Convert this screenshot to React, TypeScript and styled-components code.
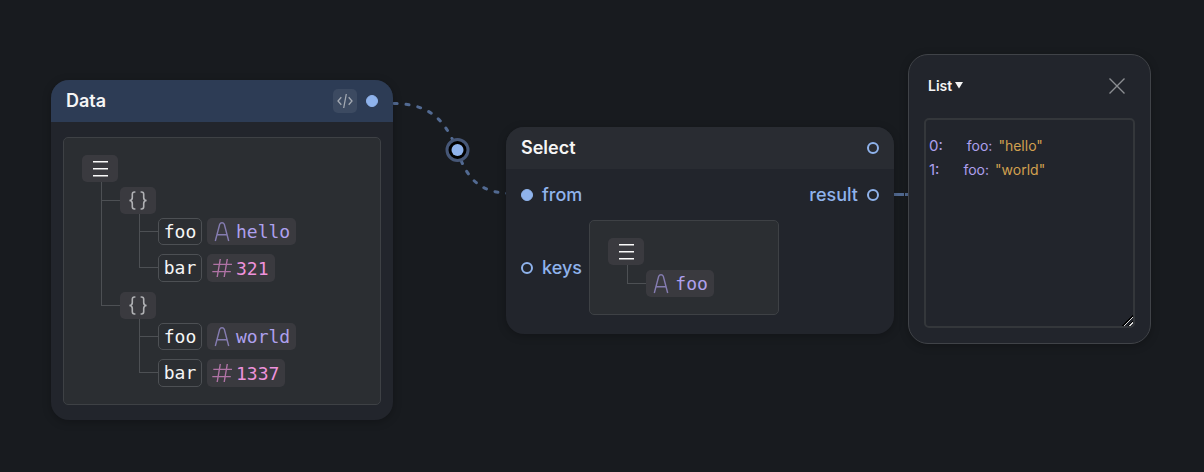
import React from "react";
import styled, { createGlobalStyle, css } from "styled-components";

const GlobalStyle = createGlobalStyle`
  *, *::before, *::after { box-sizing: border-box; }
  body {
    margin: 0;
    background: #181b1f;
    color: #f5f5f5;
    font-family: Inter, "Liberation Sans", sans-serif;
  }
  button { font: inherit; color: inherit; }
`;

const Canvas = styled.main`
  position: relative;
  min-height: 100vh;
  overflow: hidden;
`;

const Edges = styled.svg`
  position: absolute;
  inset: 0;
  width: 100%;
  height: 100%;
  pointer-events: none;
`;

const Node = styled.section<{ $x: number; $y: number; $width: number }>`
  position: absolute;
  left: ${(p) => p.$x}px;
  top: ${(p) => p.$y}px;
  width: ${(p) => p.$width}px;
  border-radius: 18px;
  overflow: hidden;
  background: #22252c;
  box-shadow: 0 2px 8px rgba(0, 0, 0, 0.25);
`;

const NodeHeader = styled.header<{ $accent?: boolean }>`
  display: flex;
  align-items: center;
  gap: 9px;
  height: 42px;
  padding: 0 15px;
  background: ${(p) => (p.$accent ? "#2d3c55" : "#292c32")};
`;

const NodeTitle = styled.h2`
  flex: 1;
  margin: 0;
  font-size: 18px;
  line-height: 24px;
  font-weight: 600;
`;

const CodeButton = styled.button`
  display: grid;
  place-items: center;
  width: 24px;
  height: 24px;
  padding: 0;
  border: 0;
  border-radius: 5px;
  background: #3c4a61;
  color: #a3a9b2;
`;

const Port = styled.button<{ $filled?: boolean }>`
  flex: none;
  width: 12px;
  height: 12px;
  padding: 0;
  border: 1px solid #8fb3ec;
  border-radius: 50%;
  background: ${(p) => (p.$filled ? "#8fb3ec" : "transparent")};
  ${(p) => !p.$filled && css`border-width: 2px;`}
`;

const DataBody = styled.div`
  padding: 15px 12px;
`;

const TreeBox = styled.div<{ $width?: number }>`
  ${(p) => p.$width && css`width: ${p.$width}px;`}
  padding: 17px 18px;
  border: 1px solid #3e4145;
  border-radius: 5px;
  background: #2b2e32;
  font-family: "DejaVu Sans Mono", monospace;
  font-size: 18px;
  line-height: 27px;
`;

const Branch = styled.ul`
  margin: 0;
  padding: 0 0 0 19px;
  list-style: none;
`;

const Leaf = styled.li<{ $gap: number }>`
  display: flex;
  > :last-child { padding-top: ${(p) => p.$gap}px; }
`;

const Connector = styled.div`
  display: flex;
  flex-direction: column;
  flex: none;
  width: 19px;
`;

const Elbow = styled.div<{ $height: number }>`
  height: ${(p) => p.$height}px;
  border: solid #4d5054;
  border-width: 0 0 1px 1px;
`;

const Stem = styled.div`
  flex: 1;
  border-left: 1px solid #4d5054;
`;

const Chip = styled.span<{ $tone?: "list" | "object" }>`
  display: flex;
  align-items: center;
  justify-content: center;
  width: 36px;
  height: 27px;
  border-radius: 5px;
  background: #3a3a3f;
  color: ${(p) => (p.$tone === "list" ? "#fafafa" : "#b0b1b4")};
`;

const Entry = styled.div`
  display: flex;
  gap: 5px;
`;

const Key = styled.span`
  width: 44px;
  border: 1px solid #4d5054;
  border-radius: 5px;
  text-align: center;
  line-height: 25px;
`;

const Value = styled.span<{ $kind: "text" | "number" }>`
  display: flex;
  align-items: center;
  gap: 4px;
  height: ${(p) => (p.$kind === "text" ? 27 : 28)}px;
  padding: 0 6px 0 5px;
  border-radius: 5px;
  background: #3a3a3f;
  color: ${(p) => (p.$kind === "text" ? "#aea0ee" : "#ee92dc")};
  svg { opacity: 0.65; }
`;

const SelectBody = styled.div`
  display: grid;
  grid-template-columns: auto 1fr auto;
  column-gap: 7px;
  padding: 0 15px 19px;
`;

const PortRow = styled.div`
  display: flex;
  align-items: center;
  gap: 9px;
  height: 51px;
  color: #8fb3ec;
  font-size: 18px;
  font-weight: 500;
`;

const KeysRow = styled(PortRow)`
  height: auto;
`;

const ResultRow = styled(PortRow)`
  grid-column: 3;
`;

const Panel = styled.aside`
  position: absolute;
  left: 908px;
  top: 54px;
  width: 243px;
  padding: 20px 15px 15px;
  border: 1px solid #404348;
  border-radius: 20px;
  background: #22252c;
  box-shadow: 0 2px 8px rgba(0, 0, 0, 0.25);
`;

const PanelHeader = styled.header`
  display: flex;
  align-items: center;
  justify-content: space-between;
  height: 21px;
  margin-bottom: 22px;
  padding: 0 10px 0 4px;
`;

const ViewButton = styled.button`
  display: flex;
  align-items: center;
  gap: 3px;
  padding: 0;
  border: 0;
  background: none;
  font-size: 14px;
  line-height: 20px;
  font-weight: 600;
`;

const CloseButton = styled.button`
  display: grid;
  padding: 0;
  border: 0;
  background: none;
  color: #8c8e92;
`;

const Output = styled.div`
  width: 211px;
  height: 210px;
  padding: 14px 3px;
  border: 2px solid #34373b;
  border-radius: 5px;
  overflow: auto;
  resize: both;
  color: #aea0ee;
  font-size: 14px;
  line-height: 24px;
  &::-webkit-resizer {
    background: linear-gradient(
      315deg,
      transparent 2px,
      #d8d8d8 2px 3px,
      #000 3px 4px,
      transparent 4px 6px,
      #d8d8d8 6px 7px,
      #000 7px 8px,
      transparent 8px
    );
  }
`;

const Result = styled.div`
  display: flex;
  gap: 24px;
`;

const Index = styled.span`
  font-size: 15px;
`;

const Field = styled.span`
  display: flex;
  gap: 6px;
`;

const Str = styled.span`
  color: #d2a04f;
`;

const ListIcon = () => (
  <svg width="15" height="17" viewBox="0 0 15 17" fill="none" stroke="currentColor" strokeWidth="1.4" aria-hidden="true">
    <path d="M0 1.7H15M0 8.7H15M0 15.7H15" />
  </svg>
);

const BracesIcon = () => (
  <svg width="18" height="19" viewBox="0 0 18 19" fill="none" stroke="currentColor" strokeWidth="1.6" aria-hidden="true">
    <path d="M6.4 1H5.5Q3.3 1 3.3 3.2V6.5Q3.3 9.5 .4 9.5Q3.3 9.5 3.3 12.5V15.8Q3.3 18 5.5 18H6.4M11.6 1H12.5Q14.7 1 14.7 3.2V6.5Q14.7 9.5 17.6 9.5Q14.7 9.5 14.7 12.5V15.8Q14.7 18 12.5 18H11.6" />
  </svg>
);

const TextIcon = () => (
  <svg width="20" height="20" viewBox="0 0 20 20" fill="none" stroke="currentColor" strokeWidth="1.4" aria-hidden="true">
    <path d="M3.3 19L7.7 2.3Q8.4 .8 10 .8T12.3 2.3L16.7 19M5 12.7H15" />
  </svg>
);

const NumberIcon = () => (
  <svg width="20" height="20" viewBox="0 0 20 20" fill="none" stroke="currentColor" strokeWidth="1.4" aria-hidden="true">
    <path d="M8.3 1L5.2 19M15.3 1L12.2 19M1.3 6.4H20M.3 13.6H18.8" />
  </svg>
);

const Item = ({ gap, last, children }: { gap: number; last?: boolean; children: React.ReactNode }) => (
  <Leaf $gap={gap}>
    <Connector>
      <Elbow $height={gap + 14} />
      {!last && <Stem />}
    </Connector>
    <div>{children}</div>
  </Leaf>
);

const Text = ({ children }: { children: string }) => (
  <Value $kind="text"><TextIcon />{children}</Value>
);

const Record = ({ foo, bar }: { foo: string; bar: number }) => (
  <>
    <Chip $tone="object"><BracesIcon /></Chip>
    <Branch>
      <Item gap={4}>
        <Entry><Key>foo</Key><Text>{foo}</Text></Entry>
      </Item>
      <Item gap={9} last>
        <Entry><Key>bar</Key><Value $kind="number"><NumberIcon />{bar}</Value></Entry>
      </Item>
    </Branch>
  </>
);

const results = ["hello", "world"];

export default function App() {
  return (
    <Canvas>
      <GlobalStyle />
      <Edges fill="none" stroke="#526a92" strokeWidth="3" aria-hidden="true">
        <path d="M394 103.500C426 104 444 116 457 150C468 182 482 193 512 193.500" strokeLinecap="round" strokeDasharray="3 9" />
        <path d="M894 194.500H904M905 194.500H910" />
        <circle cx="457.500" cy="150" r="10.500" fill="#000" stroke="#465777" />
        <circle cx="457.500" cy="150" r="6" fill="#8fb3ec" stroke="none" />
      </Edges>

      <Node $x={51} $y={80} $width={342}>
        <NodeHeader $accent>
          <NodeTitle>Data</NodeTitle>
          <CodeButton aria-label="Edit as code">
            <svg width="16" height="16" viewBox="0 0 16 16" fill="none" stroke="currentColor" strokeWidth="1.3" aria-hidden="true">
              <path d="M4.300 4.300L1 8L4.300 11.700M11.700 4.300L15 8L11.700 11.700M9.300 1L6.700 15" />
            </svg>
          </CodeButton>
          <Port $filled aria-label="Data output" />
        </NodeHeader>
        <DataBody>
          <TreeBox>
            <Chip $tone="list"><ListIcon /></Chip>
            <Branch>
              <Item gap={5}><Record foo="hello" bar={321} /></Item>
              <Item gap={10} last><Record foo="world" bar={1337} /></Item>
            </Branch>
          </TreeBox>
        </DataBody>
      </Node>

      <Node $x={506} $y={127} $width={388}>
        <NodeHeader>
          <NodeTitle>Select</NodeTitle>
          <Port aria-label="Select output" />
        </NodeHeader>
        <SelectBody>
          <PortRow><Port $filled aria-label="from input" />from</PortRow>
          <ResultRow>result<Port aria-label="result output" /></ResultRow>
          <KeysRow><Port aria-label="keys input" />keys</KeysRow>
          <TreeBox $width={190}>
            <Chip $tone="list"><ListIcon /></Chip>
            <Branch>
              <Item gap={5} last><Text>foo</Text></Item>
            </Branch>
          </TreeBox>
        </SelectBody>
      </Node>

      <Panel>
        <PanelHeader>
          <ViewButton>
            List
            <svg width="8" height="7" viewBox="0 0 8 7" fill="currentColor" aria-hidden="true"><path d="M0 0H8L4 6.500Z" /></svg>
          </ViewButton>
          <CloseButton aria-label="Close">
            <svg width="16" height="16" viewBox="0 0 16 16" fill="none" stroke="currentColor" strokeWidth="1.400" aria-hidden="true"><path d="M.5 .5L15.500 15.500M15.500 .5L.5 15.500" /></svg>
          </CloseButton>
        </PanelHeader>
        <Output>
          {results.map((value, index) => (
            <Result key={value}>
              <Index>{index}:</Index>
              <Field>foo: <Str>"{value}"</Str></Field>
            </Result>
          ))}
        </Output>
      </Panel>
    </Canvas>
  );
}
